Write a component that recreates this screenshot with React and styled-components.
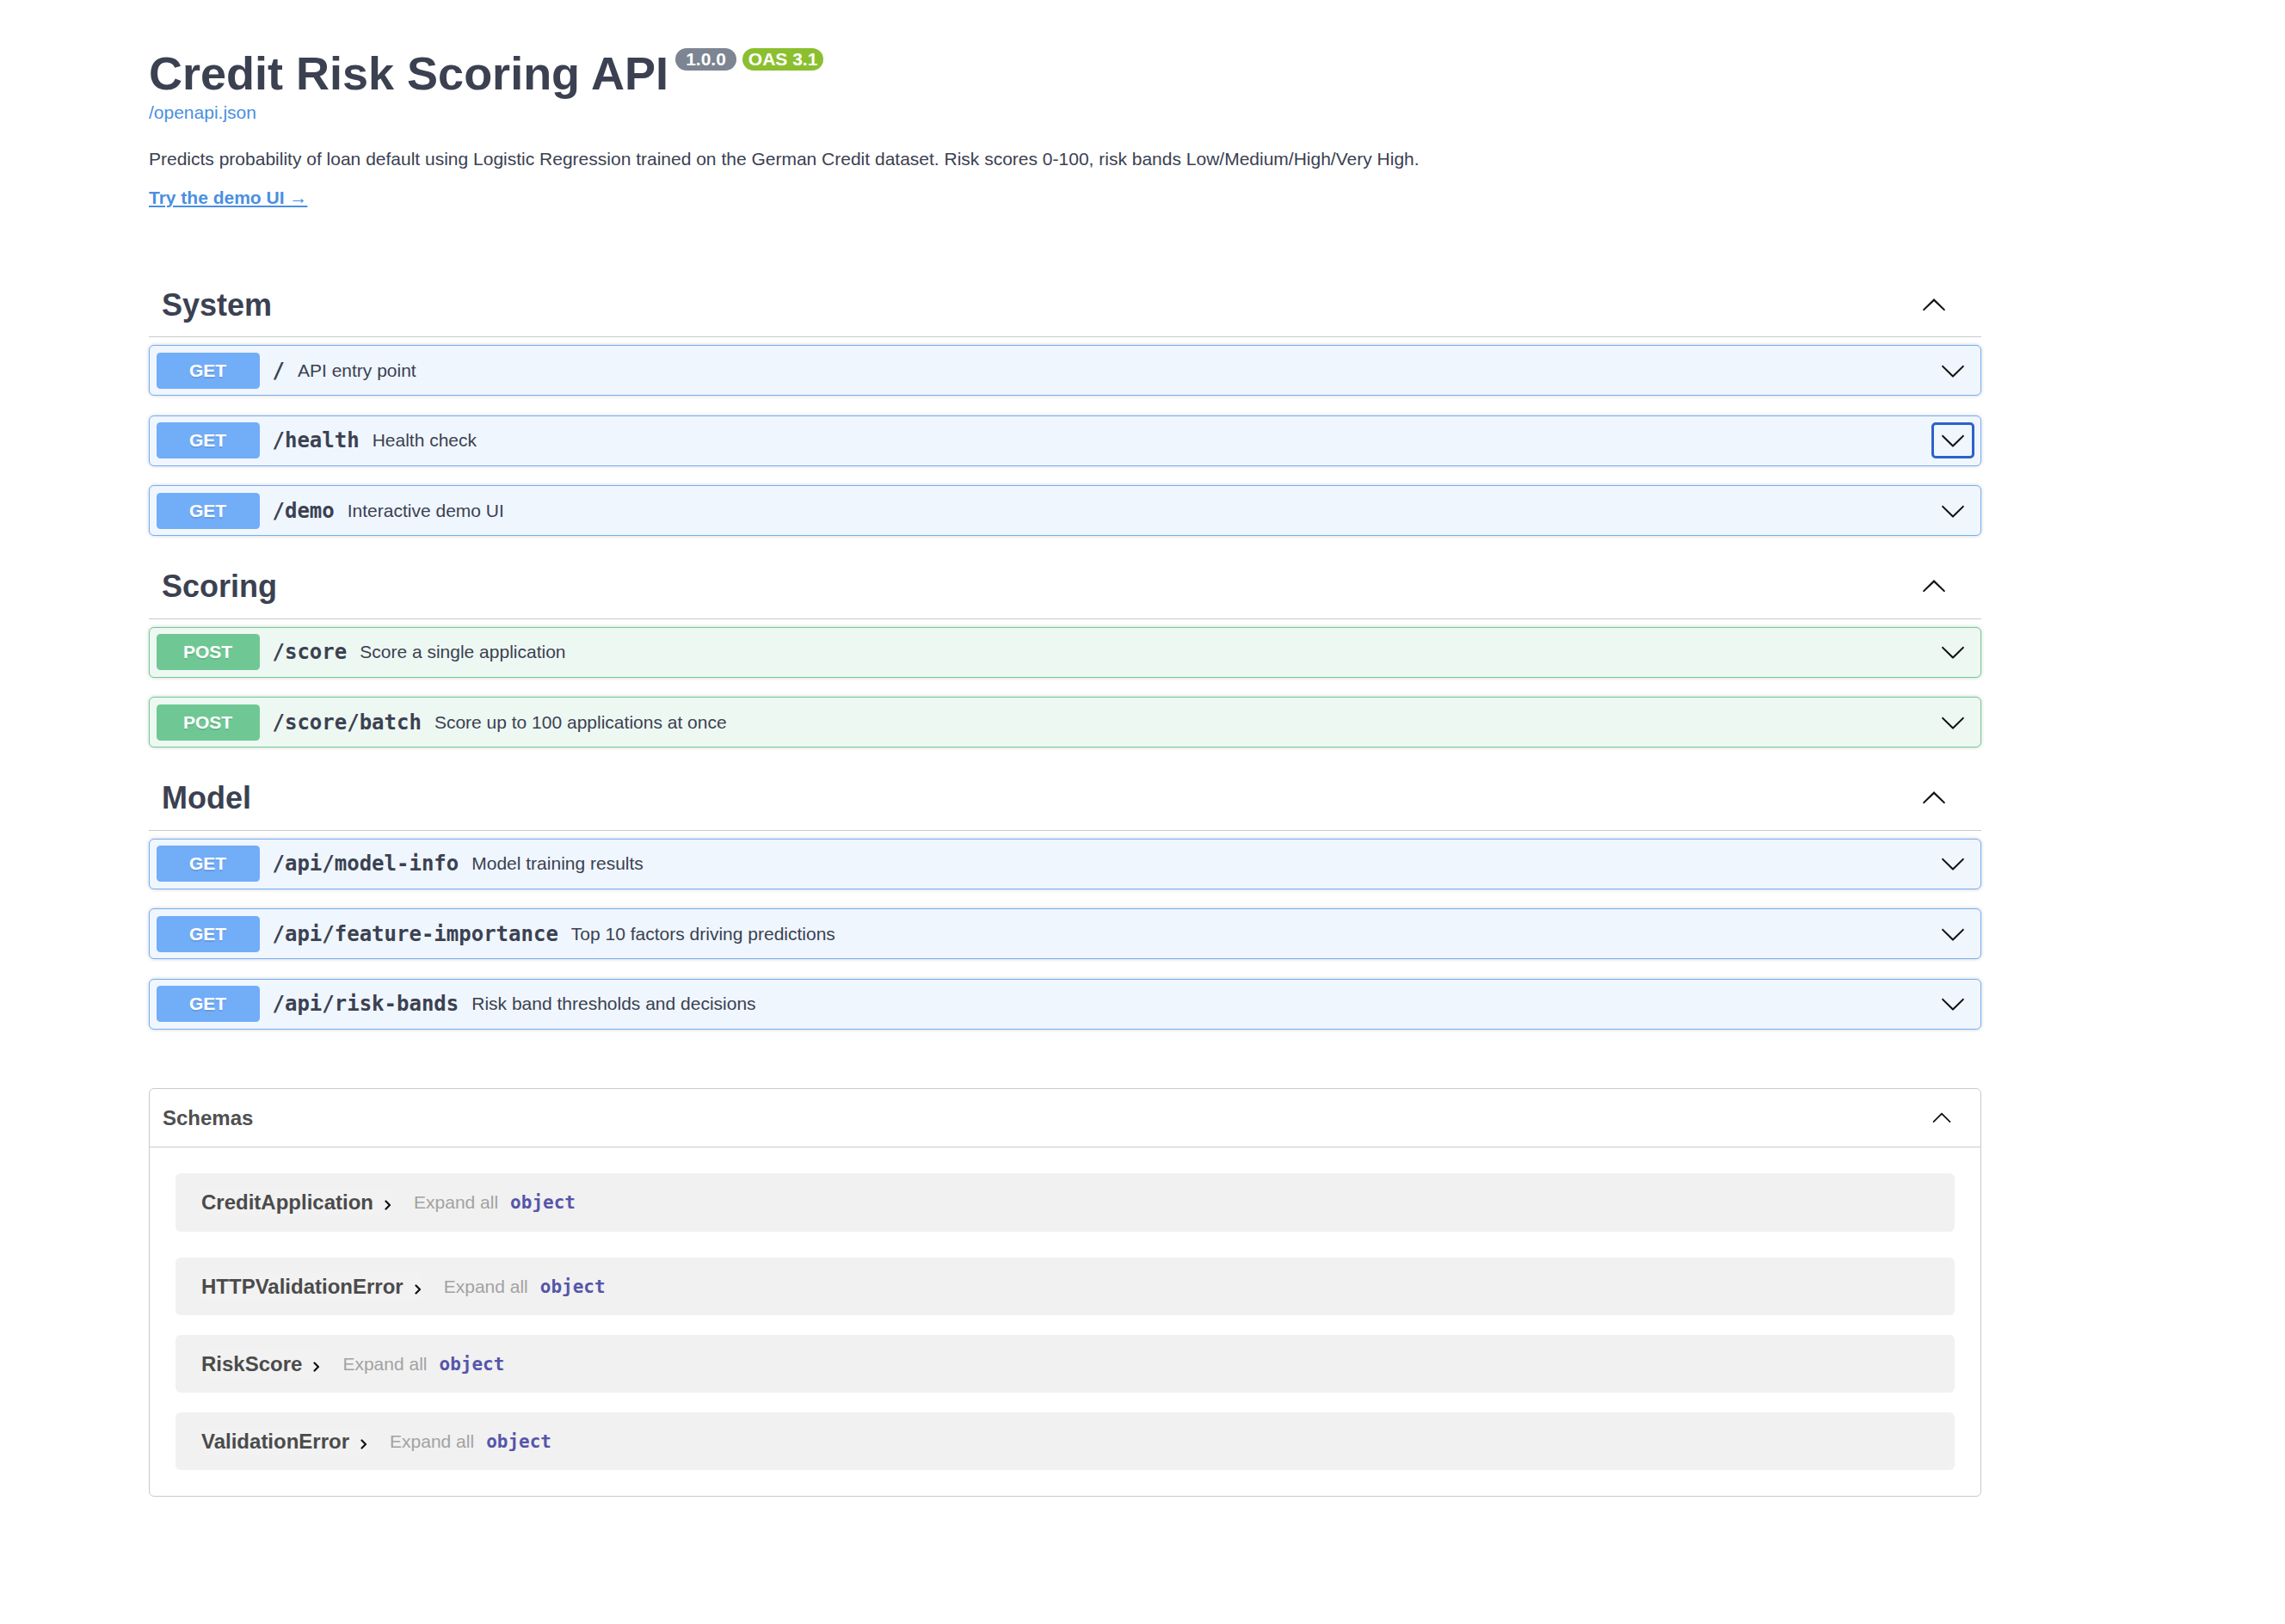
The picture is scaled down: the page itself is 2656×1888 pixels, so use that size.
import React from "react";
import styled, { createGlobalStyle } from "styled-components";

const GlobalStyle = createGlobalStyle`
  html, body { margin: 0; padding: 0; background: #ffffff; }
  body { font-family: "Liberation Sans", Arial, sans-serif; color: #3b4151; }
  * { box-sizing: border-box; }
`;

const Page = styled.div`
  width: 2130px;
  margin-left: 173px;
  padding-top: 54px;
  padding-bottom: 120px;
`;

const Info = styled.div`
  display: flex;
  flex-direction: column;
  align-items: flex-start;
  margin-bottom: 76px;
`;

const TitleRow = styled.div`
  display: flex;
  align-items: flex-start;
  height: 62px;
`;

const Title = styled.h2`
  margin: 0;
  font-size: 54px;
  line-height: 62px;
  font-weight: 700;
  color: #3b4151;
`;

const Stamp = styled.span`
  margin-top: 2px;
  margin-left: ${(p) => p.$gap}px;
  height: 26px;
  line-height: 26px;
  padding: 0 ${(p) => p.$px}px;
  border-radius: 57px;
  background: ${(p) => p.$bg};
  color: #ffffff;
  font-size: 21px;
  font-weight: 700;
`;

const SpecLink = styled.a`
  margin-top: 3px;
  font-size: 21px;
  line-height: 24px;
  color: #4a8fe2;
  text-decoration: none;
`;

const Description = styled.p`
  margin: 30px 0 0;
  font-size: 21px;
  line-height: 24px;
  color: #3b4151;
`;

const DemoLink = styled.a`
  margin-top: 21px;
  font-size: 21px;
  line-height: 24px;
  font-weight: 700;
  color: #4a8fe2;
  text-decoration: underline;
  text-underline-offset: 2px;
`;

const TagSection = styled.section`
  display: flex;
  flex-direction: column;
`;

const TagHeader = styled.div`
  display: flex;
  align-items: center;
  height: 74px;
  padding: 0 30px 0 15px;
  border-bottom: 1px solid #c8cacf;
  margin-bottom: 9px;
`;

const TagTitle = styled.h3`
  flex: 1;
  margin: 0;
  font-size: 36px;
  font-weight: 700;
  color: #3b4151;
`;

const IconButton = styled.button`
  width: ${(p) => p.$w || 50}px;
  height: 42px;
  padding: 0;
  margin: 0;
  display: flex;
  align-items: center;
  justify-content: center;
  background: transparent;
  border: 3px solid ${(p) => (p.$focused ? "#2b62c8" : "transparent")};
  border-radius: 5px;
  cursor: pointer;
`;

const Opblock = styled.div`
  display: flex;
  align-items: center;
  height: 59px;
  padding: 0 7.5px;
  margin-bottom: 22.5px;
  border: 1px solid ${(p) => p.$border};
  background: ${(p) => p.$bg};
  border-radius: 6px;
  box-shadow: 0 0 4.5px rgba(0, 0, 0, 0.19);
`;

const Method = styled.span`
  width: 120px;
  height: 42px;
  flex: none;
  display: flex;
  align-items: center;
  justify-content: center;
  border-radius: 4.5px;
  background: ${(p) => p.$bg};
  color: #ffffff;
  font-size: 21px;
  font-weight: 700;
  text-shadow: 0 1.5px 0 rgba(0, 0, 0, 0.1);
`;

const Path = styled.span`
  padding: 0 15px;
  font-family: "DejaVu Sans Mono", "Liberation Mono", monospace;
  font-size: 24px;
  font-weight: 700;
  color: #3b4151;
`;

const Summary = styled.span`
  flex: 1;
  font-size: 21px;
  color: #3b4151;
`;

const Models = styled.section`
  margin-top: 46px;
  border: 1px solid #c8cacf;
  border-radius: 6px;
`;

const ModelsHeader = styled.div`
  display: flex;
  align-items: center;
  height: 68px;
  padding: 0 30px 0 15px;
  border-bottom: 1px solid #c8cacf;
`;

const ModelsTitle = styled.h4`
  flex: 1;
  margin: 0;
  font-size: 24px;
  font-weight: 700;
  color: #4f4f4f;
`;

const ModelsBody = styled.div`
  display: flex;
  flex-direction: column;
  padding: 30px;
`;

const ModelItem = styled.div`
  display: flex;
  align-items: center;
  height: 67px;
  padding-left: 30px;
  margin-bottom: 23px;
  background: #f1f1f1;
  border-radius: 6px;
  &:first-child { height: 68px; margin-bottom: 30px; }
  &:last-child { margin-bottom: 0; }
`;

const ModelName = styled.span`
  display: flex;
  align-items: center;
  height: 32px;
  font-size: 24px;
  font-weight: 700;
  color: #4b4b4b;
  background: rgba(255, 255, 255, 0.12);
`;

const ToggleArrow = styled.svg`
  margin-left: 13px;
  margin-top: 6px;
  width: 8px;
  height: 12px;
`;

const ExpandAll = styled.span`
  margin-left: 26px;
  font-size: 21px;
  color: #a2a2a2;
`;

const TypeLabel = styled.span`
  margin-left: 14px;
  font-family: "DejaVu Sans Mono", "Liberation Mono", monospace;
  font-size: 21px;
  font-weight: 700;
  color: #5555aa;
`;

const ChevronSvg = styled.svg`
  width: 30px;
  height: 30px;
  fill: #111111;
  transform: ${(p) => (p.$up ? "rotate(180deg)" : "none")};
`;

const Chevron = ({ up }) => (
  <ChevronSvg $up={up} viewBox="0 0 20 20" aria-hidden="true">
    <path d="M17.418 6.109c.272-.268.709-.268.979 0s.271.701 0 .969l-7.908 7.83c-.27.268-.707.268-.979 0l-7.908-7.830c-.27-.268-.27-.701 0-.969.271-.268.709-.268.979 0L10 13.25l7.418-7.141z" />
  </ChevronSvg>
);

const METHOD_STYLE = {
  GET: { badge: "#72adf7", border: "#74aef7", bg: "#eff6fe" },
  POST: { badge: "#6fc894", border: "#6fcb94", bg: "#eef8f3" },
};

const tags = [
  {
    name: "System",
    ops: [
      { m: "GET", path: "/", desc: "API entry point" },
      { m: "GET", path: "/health", desc: "Health check", focused: true },
      { m: "GET", path: "/demo", desc: "Interactive demo UI" },
    ],
  },
  {
    name: "Scoring",
    ops: [
      { m: "POST", path: "/score", desc: "Score a single application" },
      { m: "POST", path: "/score/batch", desc: "Score up to 100 applications at once" },
    ],
  },
  {
    name: "Model",
    ops: [
      { m: "GET", path: "/api/model-info", desc: "Model training results" },
      { m: "GET", path: "/api/feature-importance", desc: "Top 10 factors driving predictions" },
      { m: "GET", path: "/api/risk-bands", desc: "Risk band thresholds and decisions" },
    ],
  },
];

const schemas = ["CreditApplication", "HTTPValidationError", "RiskScore", "ValidationError"];

export default function App() {
  return (
    <>
      <GlobalStyle />
      <Page>
        <Info>
          <TitleRow>
            <Title>Credit Risk Scoring API</Title>
            <Stamp $gap={8} $px={12} $bg="#7d8492">1.0.0</Stamp>
            <Stamp $gap={7} $px={7} $bg="#8bbf2f">OAS 3.1</Stamp>
          </TitleRow>
          <SpecLink href="#">/openapi.json</SpecLink>
          <Description>
            Predicts probability of loan default using Logistic Regression trained on the German Credit dataset. Risk scores 0-100, risk bands Low/Medium/High/Very High.
          </Description>
          <DemoLink href="#">Try the demo UI →</DemoLink>
        </Info>

        {tags.map((tag) => (
          <TagSection key={tag.name}>
            <TagHeader>
              <TagTitle>{tag.name}</TagTitle>
              <IconButton aria-label="collapse">
                <Chevron up />
              </IconButton>
            </TagHeader>
            {tag.ops.map((op) => {
              const s = METHOD_STYLE[op.m];
              return (
                <Opblock key={op.path} $border={s.border} $bg={s.bg}>
                  <Method $bg={s.badge}>{op.m}</Method>
                  <Path>{op.path}</Path>
                  <Summary>{op.desc}</Summary>
                  <IconButton $focused={op.focused} aria-label="expand">
                    <Chevron />
                  </IconButton>
                </Opblock>
              );
            })}
          </TagSection>
        ))}

        <Models>
          <ModelsHeader>
            <ModelsTitle>Schemas</ModelsTitle>
            <IconButton $w={30} aria-label="collapse">
              <Chevron up />
            </IconButton>
          </ModelsHeader>
          <ModelsBody>
            {schemas.map((name) => (
              <ModelItem key={name}>
                <ModelName>
                  {name}
                  <ToggleArrow viewBox="0 0 8 12" aria-hidden="true">
                    <path d="M1.5 1.5 L6 6 L1.5 10.5" fill="none" stroke="#111" strokeWidth="2.2" strokeLinecap="round" strokeLinejoin="round" />
                  </ToggleArrow>
                </ModelName>
                <ExpandAll>Expand all</ExpandAll>
                <TypeLabel>object</TypeLabel>
              </ModelItem>
            ))}
          </ModelsBody>
        </Models>
      </Page>
    </>
  );
}
